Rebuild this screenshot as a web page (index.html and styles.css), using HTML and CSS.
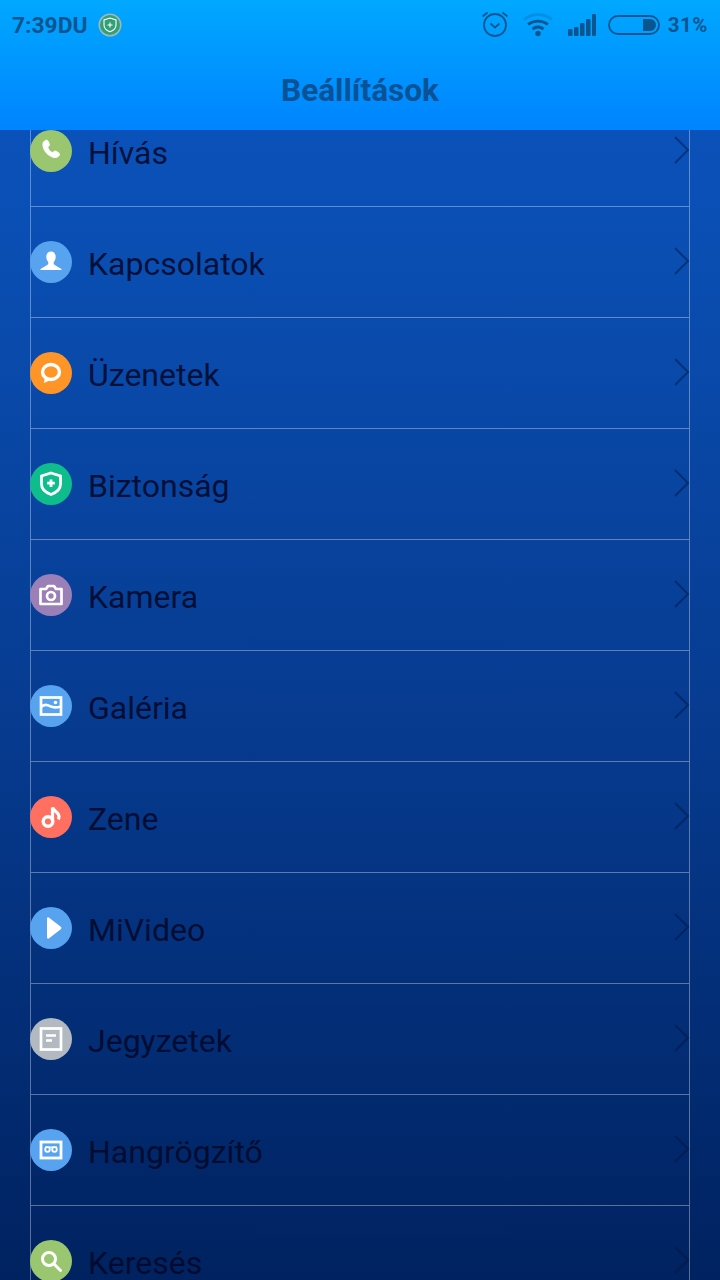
FILE: index.html
```html
<!DOCTYPE html>
<html lang="hu">
<head>
    <meta charset="UTF-8">
    <meta name="viewport" content="width=device-width, initial-scale=1.0">
    <title>Beállítások</title>
    <link rel="stylesheet" href="styles.css">
</head>
<body>
    <div class="header">
        <div class="status-bar">
            <div class="status-left">
                <span class="time">7:39DU</span>
                <svg class="guard" width="24" height="24" viewBox="0 0 24 24">
                    <circle cx="12" cy="12" r="11.5" fill="#9fb9b4"/>
                    <circle cx="12" cy="12" r="10" fill="#31a077"/>
                    <path d="M12 5l6 2v5c0 3.400-2.600 5.500-6 6.800-3.400-1.300-6-3.400-6-6.800V7z" fill="none" stroke="#fff" stroke-width="1.100"/>
                    <path d="M12 9.500v5M9.500 12h5" stroke="#fff" stroke-width="1.100"/>
                </svg>
            </div>
            <div class="status-right">
                <svg class="alarm" width="28" height="28" viewBox="0 0 28 28" fill="none" stroke="#0a5590" stroke-width="1.800">
                    <circle cx="14" cy="15" r="11"/>
                    <path d="M9.500 13.500l4.500 4 4.500-4"/>
                    <path d="M1.500 6.500l5-4M26.500 6.500l-5-4"/>
                </svg>
                <svg class="wifi" width="30" height="24" viewBox="0 0 30 24" fill="none" stroke="#0a5590" stroke-width="2.800">
                    <path d="M1 6.500c8-6.500 20-6.500 28 0" stroke-opacity="0.250"/>
                    <path d="M5 11.500c6-4.500 14-4.500 20 0"/>
                    <path d="M9.500 16c3.500-2.500 7.500-2.500 11 0"/>
                    <circle cx="15" cy="20.500" r="2.700" fill="#0a5590" stroke="none"/>
                </svg>
                <svg class="signal" width="28" height="22" viewBox="0 0 28 22" fill="#0a5590">
                    <rect x="0" y="15" width="4.500" height="7" rx="1"/>
                    <rect x="6" y="13" width="4.500" height="9" rx="1"/>
                    <rect x="12" y="9" width="4.500" height="13" rx="1"/>
                    <rect x="18" y="5" width="4.500" height="17" rx="1"/>
                    <rect x="24" y="0" width="4" height="22" rx="1"/>
                </svg>
                <svg class="battery" width="52" height="20" viewBox="0 0 52 20">
                    <rect x="1" y="1" width="50" height="18" rx="9" fill="none" stroke="#0a5590" stroke-width="1.800"/>
                    <path d="M35 4h7a6 6 0 0 1 6 6 6 6 0 0 1-6 6h-7z" fill="#0a5590"/>
                </svg>
                <span class="percent">31%</span>
            </div>
        </div>
        <h1 class="title">Beállítások</h1>
    </div>

    <div class="viewport">
        <ul class="settings">
            <li class="row">
                <span class="badge green">
                    <svg width="42" height="42" viewBox="0 0 42 42"><path d="M14.500 11c1.500-1.300 3-1 3.700.4l1 2.300c.4.900.2 1.700-.5 2.300l-1 1c.7 2.800 2.500 4.700 5 5.700l1.200-1.100c.7-.6 1.500-.7 2.300-.2l2.300 1.300c1.200.7 1.300 2.300.2 3.300-1.300 1.300-3 1.900-4.900 1.400-6.200-1.700-10.300-6.300-10.900-12.800-.1-1.300.4-2.500 1.600-3.600z" fill="#fff" stroke="#fff"/></svg>
                </span>
                <span class="label">Hívás</span>
                <svg class="chevron" width="16" height="28" viewBox="0 0 16 28"><path d="M1 1l13 13L1 27" /></svg>
            </li>
            <li class="row">
                <span class="badge blue">
                    <svg width="42" height="42" viewBox="0 0 42 42"><path d="M21 10.500c2.900 0 4.700 2.400 4.700 5.300 0 2.200-.8 4-2 5.200v1.700c0 1.200 4.700 3 7.800 5.300V29h-21v-1c3.100-2.300 7.800-4.100 7.800-5.300V21c-1.200-1.200-2-3-2-5.200 0-2.900 1.800-5.300 4.700-5.300z" fill="#fff"/></svg>
                </span>
                <span class="label">Kapcsolatok</span>
                <svg class="chevron" width="16" height="28" viewBox="0 0 16 28"><path d="M1 1l13 13L1 27" /></svg>
            </li>
            <li class="row">
                <span class="badge orange">
                    <svg width="42" height="42" viewBox="0 0 42 42"><ellipse cx="21" cy="20" rx="8.500" ry="7.500" fill="none" stroke="#fff" stroke-width="3.400"/><path d="M15 25l-1 6 6.500-3z" fill="#fff"/></svg>
                </span>
                <span class="label">Üzenetek</span>
                <svg class="chevron" width="16" height="28" viewBox="0 0 16 28"><path d="M1 1l13 13L1 27" /></svg>
            </li>
            <li class="row">
                <span class="badge teal">
                    <svg width="42" height="42" viewBox="0 0 42 42" fill="none" stroke="#fff"><path d="M21 10l9.500 3v8c0 5.300-4 8.500-9.500 10.500-5.500-2-9.500-5.200-9.500-10.500v-8z" stroke-width="2.800"/><path d="M21 16.500v7.500M17.200 20.200h7.600" stroke-width="2.800"/></svg>
                </span>
                <span class="label">Biztonság</span>
                <svg class="chevron" width="16" height="28" viewBox="0 0 16 28"><path d="M1 1l13 13L1 27" /></svg>
            </li>
            <li class="row">
                <span class="badge purple">
                    <svg width="42" height="42" viewBox="0 0 42 42" fill="none" stroke="#fff" stroke-width="2.700"><path d="M10.500 15h5.500l2-3h6l2 3h5.500v15h-21z" stroke-linejoin="round"/><circle cx="21" cy="22" r="4"/></svg>
                </span>
                <span class="label">Kamera</span>
                <svg class="chevron" width="16" height="28" viewBox="0 0 16 28"><path d="M1 1l13 13L1 27" /></svg>
            </li>
            <li class="row">
                <span class="badge blue">
                    <svg width="42" height="42" viewBox="0 0 42 42" fill="none" stroke="#fff" stroke-width="2.700"><rect x="11" y="12.500" width="20" height="17"/><path d="M11 22c3-3 6-2.500 9-.8s6 1.800 11 .3"/><circle cx="25.500" cy="17.500" r="1.800" fill="#fff" stroke="none"/></svg>
                </span>
                <span class="label">Galéria</span>
                <svg class="chevron" width="16" height="28" viewBox="0 0 16 28"><path d="M1 1l13 13L1 27" /></svg>
            </li>
            <li class="row">
                <span class="badge coral">
                    <svg width="42" height="42" viewBox="0 0 42 42" fill="none" stroke="#fff"><circle cx="18" cy="25.500" r="4.800" stroke-width="3.400"/><path d="M22.500 25.500V11.500c1 3.500 6.500 4.500 6.500 9 0 1-.3 2-.8 2.800" stroke-width="3.200"/></svg>
                </span>
                <span class="label">Zene</span>
                <svg class="chevron" width="16" height="28" viewBox="0 0 16 28"><path d="M1 1l13 13L1 27" /></svg>
            </li>
            <li class="row">
                <span class="badge blue">
                    <svg width="42" height="42" viewBox="0 0 42 42"><path d="M17 11.500c0-1 1-1.500 1.800-1l12 9.300c.8.600.8 1.800 0 2.400l-12 9.300c-.8.500-1.800 0-1.800-1z" fill="#fff"/></svg>
                </span>
                <span class="label">MiVideo</span>
                <svg class="chevron" width="16" height="28" viewBox="0 0 16 28"><path d="M1 1l13 13L1 27" /></svg>
            </li>
            <li class="row">
                <span class="badge gray">
                    <svg width="42" height="42" viewBox="0 0 42 42" fill="none" stroke="#fff" stroke-width="2.700"><rect x="11" y="10.500" width="20" height="21"/><path d="M16 17.500h10M16 22.500h6"/></svg>
                </span>
                <span class="label">Jegyzetek</span>
                <svg class="chevron" width="16" height="28" viewBox="0 0 16 28"><path d="M1 1l13 13L1 27" /></svg>
            </li>
            <li class="row">
                <span class="badge blue">
                    <svg width="42" height="42" viewBox="0 0 42 42" fill="none" stroke="#fff"><rect x="11" y="13" width="20" height="16" stroke-width="2.800"/><circle cx="17.500" cy="20.500" r="2.300" stroke-width="1.800"/><circle cx="24.500" cy="20.500" r="2.300" stroke-width="1.800"/><path d="M15 18.200h12" stroke-width="1.400"/></svg>
                </span>
                <span class="label">Hangrögzítő</span>
                <svg class="chevron" width="16" height="28" viewBox="0 0 16 28"><path d="M1 1l13 13L1 27" /></svg>
            </li>
            <li class="row">
                <span class="badge green">
                    <svg width="42" height="42" viewBox="0 0 42 42" fill="none" stroke="#fff" stroke-width="3"><circle cx="19" cy="19" r="6.500"/><path d="M24 24l6.500 6.500" stroke-linecap="round"/></svg>
                </span>
                <span class="label">Keresés</span>
                <svg class="chevron" width="16" height="28" viewBox="0 0 16 28"><path d="M1 1l13 13L1 27" /></svg>
            </li>
        </ul>
    </div>
</body>
</html>
```
FILE: styles.css
```css
body {
    font-family: Roboto, 'Noto Sans', sans-serif;
    margin: 0;
    width: 720px;
    height: 1280px;
    overflow: hidden;
    background: linear-gradient(180deg, #0a54c0 0%, #0a4eb2 20%, #06398c 60%, #002260 100%);
}

.header {
    height: 130px;
    background: linear-gradient(180deg, #00a8ff 0%, #0084ff 100%);
}

.status-bar {
    display: flex;
    justify-content: space-between;
    align-items: center;
    height: 50px;
    padding: 0 12px;
}

.status-left,
.status-right {
    display: flex;
    align-items: center;
}

.time {
    font-size: 22.8px;
    font-weight: 700;
    color: #0a5590;
}

.guard {
    margin-left: 10px;
}

.alarm {
    margin-right: 14px;
    margin-bottom: 3px;
}

.wifi {
    margin-right: 15px;
}

.signal {
    margin-right: 12px;
}

.battery {
    margin-right: 8px;
}

.percent {
    font-size: 20.5px;
    font-weight: 700;
    letter-spacing: 0.5px;
    color: #0a5590;
}

.title {
    margin: 0;
    font-size: 31.6px;
    font-weight: 700;
    line-height: 82px;
    text-align: center;
    color: #0a5296;
}

.viewport {
    height: 1150px;
    overflow: hidden;
}

.settings {
    list-style-type: none;
    margin: -34px 30px 0;
    padding: 0;
    border-left: 1px solid rgba(255, 255, 255, 0.35);
    border-right: 1px solid rgba(255, 255, 255, 0.35);
}

.row {
    display: flex;
    align-items: center;
    height: 110px;
    border-bottom: 1px solid rgba(255, 255, 255, 0.35);
}

.badge {
    display: block;
    width: 42px;
    height: 42px;
    border-radius: 50%;
    margin-left: -1px;
    flex-shrink: 0;
}

.badge svg {
    display: block;
}

.green { background-color: #9ac66f; }
.blue { background-color: #57a3f0; }
.orange { background-color: #ff9526; }
.teal { background-color: #0fbd8c; }
.purple { background-color: #9b80b8; }
.coral { background-color: #ff7060; }
.gray { background-color: #b2b9c0; }

.label {
    margin-left: 16px;
    margin-top: 4px;
    font-size: 32px;
    color: rgba(0, 8, 40, 0.88);
}

.chevron {
    margin-left: auto;
    margin-right: -1px;
    margin-top: -3px;
}

.chevron path {
    fill: none;
    stroke: rgba(0, 20, 60, 0.45);
    stroke-width: 2;
}
```
